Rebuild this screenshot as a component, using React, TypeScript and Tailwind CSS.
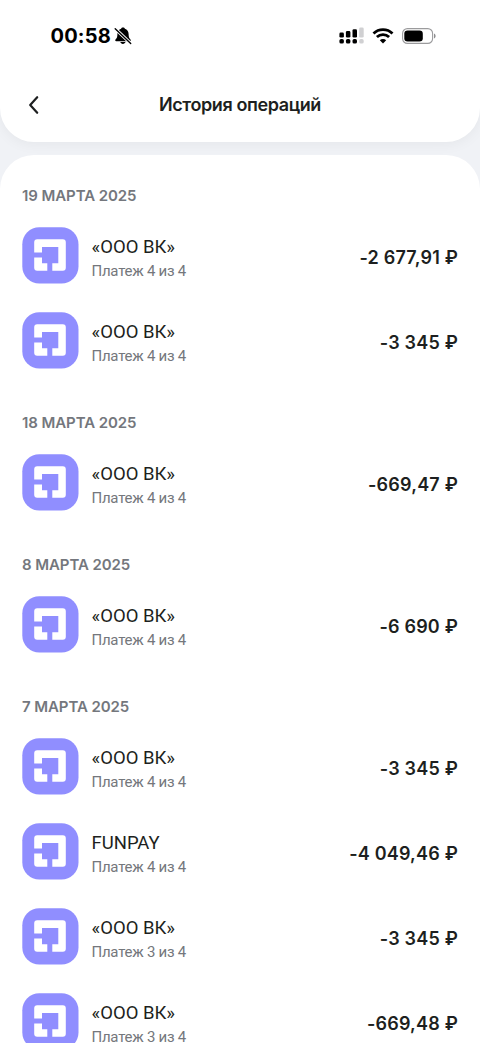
interface Operation {
  title: string
  note: string
  amount: string
}

interface OperationGroup {
  date: string
  items: Operation[]
}

const groups: OperationGroup[] = [
  {
    date: '19 МАРТА 2025',
    items: [
      { title: '«ООО ВК»', note: 'Платеж 4 из 4', amount: '-2 677,91 ₽' },
      { title: '«ООО ВК»', note: 'Платеж 4 из 4', amount: '-3 345 ₽' },
    ],
  },
  {
    date: '18 МАРТА 2025',
    items: [{ title: '«ООО ВК»', note: 'Платеж 4 из 4', amount: '-669,47 ₽' }],
  },
  {
    date: '8 МАРТА 2025',
    items: [{ title: '«ООО ВК»', note: 'Платеж 4 из 4', amount: '-6 690 ₽' }],
  },
  {
    date: '7 МАРТА 2025',
    items: [
      { title: '«ООО ВК»', note: 'Платеж 4 из 4', amount: '-3 345 ₽' },
      { title: 'FUNPAY', note: 'Платеж 4 из 4', amount: '-4 049,46 ₽' },
      { title: '«ООО ВК»', note: 'Платеж 3 из 4', amount: '-3 345 ₽' },
      { title: '«ООО ВК»', note: 'Платеж 3 из 4', amount: '-669,48 ₽' },
    ],
  },
]

function BellOffIcon() {
  return (
    <svg width="18" height="18" viewBox="0 0 18 18" fill="none">
      <path
        d="M9 .6c1 0 1.700.5 1.900 1.200 2.300.8 3.700 2.700 3.700 5.200 0 2.900.5 3.900 1.500 5 .5.5.7.9.7 1.300 0 .6-.4.9-1.100.9H2.300c-.7 0-1.100-.3-1.100-.9 0-.4.2-.8.7-1.300 1-1.100 1.500-2.100 1.500-5 0-2.500 1.400-4.400 3.700-5.200C7.300 1.100 8 .6 9 .6Z"
        fill="#000"
      />
      <path d="M6.300 15.100h5.200c-.3 1.100-1.300 1.800-2.600 1.800s-2.300-.7-2.600-1.800Z" fill="#000" />
      <path d="M.9 1.500 16.900 16.700" stroke="#fff" strokeWidth="3.200" />
      <path d="M1.200 1.800 16.700 16.500" stroke="#000" strokeWidth="1.400" strokeLinecap="round" />
    </svg>
  )
}

function SignalIcon() {
  return (
    <svg width="25" height="18" viewBox="0 0 25 18">
      <rect x="0.400" y="5.600" width="4.500" height="5" rx="1.300" />
      <rect x="6.900" y="4.100" width="4.500" height="6.500" rx="1.300" />
      <rect x="13.500" y="2.200" width="4.500" height="8.400" rx="1.300" />
      <rect x="20.200" y="0.500" width="4.500" height="10.100" rx="1.300" fill="#d0d0d2" />
      <rect x="0.400" y="12" width="4.500" height="4.600" rx="1.700" />
      <rect x="6.900" y="12" width="4.500" height="4.600" rx="1.700" />
      <rect x="13.500" y="12" width="4.500" height="4.600" rx="1.700" />
      <rect x="20.200" y="12" width="4.500" height="4.600" rx="1.700" fill="#d0d0d2" />
    </svg>
  )
}

function WifiIcon() {
  return (
    <svg width="22" height="16" viewBox="0 0 22 16" fill="none" stroke="#000" strokeWidth="2.800">
      <path d="M1.500 5.400a13.700 13.700 0 0 1 19 0" />
      <path d="M4.900 9a8.800 8.800 0 0 1 12.200 0" />
      <path d="M11 15.500 7.800 12.300a4.600 4.600 0 0 1 6.400 0Z" fill="#000" stroke="none" />
    </svg>
  )
}

function BatteryIcon() {
  return (
    <svg width="34" height="16" viewBox="0 0 34 16">
      <rect x="0.600" y="0.600" width="30" height="14.800" rx="4.800" fill="none" stroke="#9b9b9d" strokeWidth="1.100" />
      <rect x="2.300" y="2.400" width="18.500" height="11.200" rx="3.300" />
      <path d="M32 5.500c1 .4 1.600 1.400 1.600 2.500S33 10.100 32 10.500Z" fill="#8e8e90" />
    </svg>
  )
}

function MerchantIcon() {
  return (
    <svg width="57" height="57" viewBox="0 0 57 57" className="shrink-0">
      <rect x="0.300" y="0.300" width="56.200" height="56.200" rx="17" fill="#908eff" />
      <path
        d="M15.200 12.300H40.800a3 3 0 0 1 3 3V40.700a3 3 0 0 1-3 3H30.300V36.200H36.300V20H20V25.400H12.200V15.300a3 3 0 0 1 3-3Z"
        fill="#fff"
      />
      <path d="M12.200 30.400H20V36.200H25.300V43.700H15.200a3 3 0 0 1-3-3Z" fill="#fff" />
    </svg>
  )
}

function StatusBar() {
  return (
    <div className="flex h-[70px] items-center justify-between pt-[1px] pr-[44px] pl-[50.5px]">
      <div className="flex items-center gap-[3px]">
        <span className="text-[20px] leading-6 font-bold tracking-[0.2px] text-black">00:58</span>
        <BellOffIcon />
      </div>
      <div className="flex items-center">
        <SignalIcon />
        <div className="ml-[8px]">
          <WifiIcon />
        </div>
        <div className="ml-[8px]">
          <BatteryIcon />
        </div>
      </div>
    </div>
  )
}

function OperationRow({ title, note, amount }: Operation) {
  return (
    <div className="flex h-[57px] items-center">
      <MerchantIcon />
      <div className="ml-[12.5px] flex-1 pt-[6px] font-['Roboto',sans-serif]">
        <div className="text-[18.5px] leading-6 text-[#1d1f20]">{title}</div>
        <div className="text-[15px] leading-6 tracking-[-0.25px] text-[#74777c]">{note}</div>
      </div>
      <div className="pt-[5px] text-[18px] leading-6 font-semibold tracking-[0.2px] text-[#1d1f20]">{amount}</div>
    </div>
  )
}

export default function App() {
  return (
    <div className="h-[1043px] w-[480px] overflow-hidden bg-[#f0f2f6] font-['Inter',sans-serif]">
      <div className="h-[142px] rounded-b-[34px] bg-white shadow-[0_2px_14px_rgba(0,0,0,0.05)]">
        <StatusBar />
        <div className="grid h-[70px] grid-cols-[60px_1fr_60px] items-center">
          <svg width="12" height="20" viewBox="0 0 12 20" fill="none" className="ml-[28px]">
            <path d="M9.200 2.200 2.200 10l7 7.800" stroke="#1d1f20" strokeWidth="2.200" strokeLinecap="round" strokeLinejoin="round" />
          </svg>
          <h1 className="text-center text-[18px] leading-6 font-semibold tracking-[-0.4px] text-[#1d1f20]">
            История операций
          </h1>
        </div>
      </div>

      <div className="mt-[13px] flex flex-col gap-[42px] rounded-t-[34px] bg-white px-[22px] pt-[29px] pb-6">
        {groups.map((group) => (
          <section key={group.date}>
            <h2 className="h-6 text-[15px] leading-6 font-semibold tracking-[-0.08px] text-[#74777d]">{group.date}</h2>
            <div className="mt-[19px] flex flex-col gap-[28px]">
              {group.items.map((item, i) => (
                <OperationRow key={i} {...item} />
              ))}
            </div>
          </section>
        ))}
      </div>
    </div>
  )
}
